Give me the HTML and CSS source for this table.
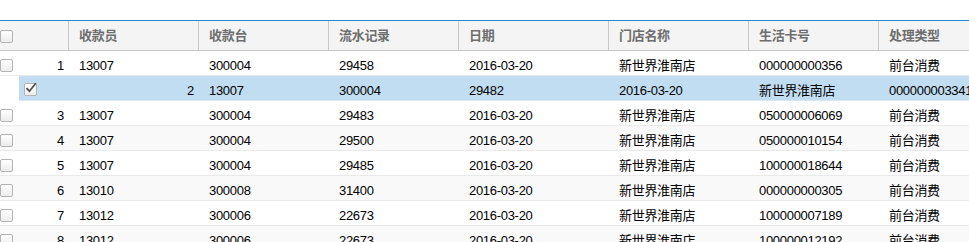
FILE: index.html
```html
<!DOCTYPE html>
<html lang="zh-CN">
<head>
<meta charset="utf-8">
<title>收款记录</title>
<link rel="stylesheet" href="styles.css">
</head>
<body>
<div class="grid">
  <div class="head">
    <div class="hcell first"><span class="cb"></span></div>
    <div class="hcell">收款员</div>
    <div class="hcell">收款台</div>
    <div class="hcell">流水记录</div>
    <div class="hcell">日期</div>
    <div class="hcell">门店名称</div>
    <div class="hcell">生活卡号</div>
    <div class="hcell">处理类型</div>
  </div>

  <div class="row">
    <div class="cell first"><span class="cb"></span><span class="num">1</span></div>
    <div class="cell">13007</div><div class="cell">300004</div><div class="cell">29458</div><div class="cell">2016-03-20</div><div class="cell">新世界淮南店</div><div class="cell">000000000356</div><div class="cell">前台消费</div>
  </div>

  <div class="row sel">
    <div class="cell chkcell"><span class="cb checked"><svg viewBox="0 0 14 14" width="14" height="14"><path d="M2.5 7.2 L5.4 10.2 L11.8 2.2" fill="none" stroke="#505050" stroke-width="1.8"/></svg></span></div>
    <div class="cell numcell">2</div>
    <div class="cell">13007</div><div class="cell">300004</div><div class="cell">29482</div><div class="cell">2016-03-20</div><div class="cell">新世界淮南店</div><div class="cell">000000003341</div>
  </div>

  <div class="row">
    <div class="cell first"><span class="cb"></span><span class="num">3</span></div>
    <div class="cell">13007</div><div class="cell">300004</div><div class="cell">29483</div><div class="cell">2016-03-20</div><div class="cell">新世界淮南店</div><div class="cell">050000006069</div><div class="cell">前台消费</div>
  </div>

  <div class="row alt">
    <div class="cell first"><span class="cb"></span><span class="num">4</span></div>
    <div class="cell">13007</div><div class="cell">300004</div><div class="cell">29500</div><div class="cell">2016-03-20</div><div class="cell">新世界淮南店</div><div class="cell">050000010154</div><div class="cell">前台消费</div>
  </div>

  <div class="row">
    <div class="cell first"><span class="cb"></span><span class="num">5</span></div>
    <div class="cell">13007</div><div class="cell">300004</div><div class="cell">29485</div><div class="cell">2016-03-20</div><div class="cell">新世界淮南店</div><div class="cell">100000018644</div><div class="cell">前台消费</div>
  </div>

  <div class="row alt">
    <div class="cell first"><span class="cb"></span><span class="num">6</span></div>
    <div class="cell">13010</div><div class="cell">300008</div><div class="cell">31400</div><div class="cell">2016-03-20</div><div class="cell">新世界淮南店</div><div class="cell">000000000305</div><div class="cell">前台消费</div>
  </div>

  <div class="row">
    <div class="cell first"><span class="cb"></span><span class="num">7</span></div>
    <div class="cell">13012</div><div class="cell">300006</div><div class="cell">22673</div><div class="cell">2016-03-20</div><div class="cell">新世界淮南店</div><div class="cell">100000007189</div><div class="cell">前台消费</div>
  </div>

  <div class="row alt">
    <div class="cell first"><span class="cb"></span><span class="num">8</span></div>
    <div class="cell">13012</div><div class="cell">300006</div><div class="cell">22673</div><div class="cell">2016-03-20</div><div class="cell">新世界淮南店</div><div class="cell">100000012192</div><div class="cell">前台消费</div>
  </div>
</div>
</body>
</html>
```

FILE: styles.css
```css
html, body {
  margin: 0;
  padding: 0;
  background: #fff;
  overflow: hidden;
}
body {
  padding-top: 20px;
  font-family: "Liberation Sans", "Noto Sans CJK SC", sans-serif;
  font-size: 13px;
  letter-spacing: -0.3px;
  color: #000;
}
.grid {
  width: 969px;
}
.head {
  display: grid;
  grid-template-columns: 68px 130px 130px 130px 150px 140px 130px 1fr;
  height: 29px;
  background: #f4f4f4;
  border-top: 1px solid #1f88d6;
  border-bottom: 1px solid #c6c6c6;
}
.hcell {
  border-left: 1px solid #c8c8c8;
  padding-left: 10px;
  line-height: 29px;
  color: #6e6e6e;
  font-weight: bold;
  white-space: nowrap;
  overflow: hidden;
}
.hcell.first {
  border-left: none;
  padding-left: 0;
}
.head .cb {
  margin-top: 9px;
}
.row {
  display: grid;
  grid-template-columns: 68px 130px 130px 130px 150px 140px 130px 1fr;
  height: 24px;
  border-bottom: 1px solid #e9e9e9;
  background: #fff;
}
.row.alt {
  background: #f9f9f9;
}
.row.sel {
  margin-left: 19px;
  grid-template-columns: 49px 130px 130px 130px 150px 140px 130px 1fr;
  background: #c1ddf1;
  border-bottom-color: #dbe8f3;
}
.cell {
  padding: 5px 0 0 11px;
  line-height: 19px;
  white-space: nowrap;
  overflow: hidden;
}
.cell.first {
  display: flex;
  justify-content: space-between;
  align-items: flex-start;
  padding: 0;
}
.cell.first .cb {
  margin-top: 8px;
}
.num {
  padding: 5px 4px 0 0;
  line-height: 19px;
}
.chkcell {
  padding: 7px 0 0 5px;
}
.numcell {
  text-align: right;
  padding-right: 4px;
}
.cb {
  display: block;
  box-sizing: border-box;
  width: 13px;
  height: 13px;
  border: 1px solid #b4b4b4;
  border-radius: 2px;
  background: linear-gradient(#ffffff, #ececec);
  position: relative;
}
.cb.checked svg {
  position: absolute;
  left: -1px;
  top: -3px;
}
```
